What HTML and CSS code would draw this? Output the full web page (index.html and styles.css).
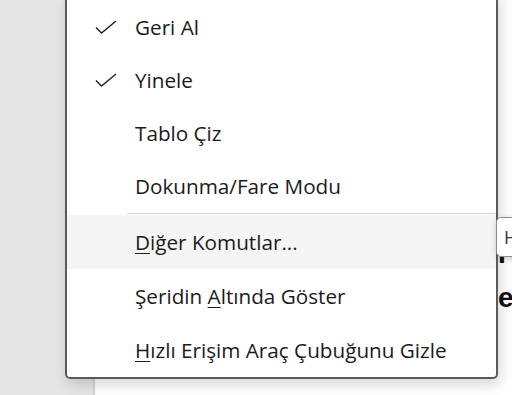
FILE: index.html
```html
<!DOCTYPE html>
<html lang="tr">
<head>
<meta charset="utf-8">
<link rel="stylesheet" href="styles.css">
</head>
<body>
<div class="app">
  <div class="gutter"></div>
  <div class="page">
    <div class="doc-line doc-line-h">Hızlı</div>
    <div class="doc-line doc-line-e">ekle</div>
  </div>
</div>

<div class="menu">
  <div class="item"><span class="check"><svg width="22" height="14" viewBox="0 0 22 14"><path d="M1 7.5 L6.5 13 L21 1" fill="none" stroke="#1f1f1f" stroke-width="1.4"/></svg></span><span class="label">Geri Al</span></div>
  <div class="item"><span class="check"><svg width="22" height="14" viewBox="0 0 22 14"><path d="M1 7.5 L6.5 13 L21 1" fill="none" stroke="#1f1f1f" stroke-width="1.4"/></svg></span><span class="label">Yinele</span></div>
  <div class="item"><span class="check"></span><span class="label">Tablo Çiz</span></div>
  <div class="item"><span class="check"></span><span class="label">Dokunma/Fare Modu</span></div>
  <div class="sep"></div>
  <div class="item item-lg item-hover"><span class="check"></span><span class="label"><u>D</u>iğer Komutlar...</span></div>
  <div class="item item-lg"><span class="check"></span><span class="label">Şeridin <u>A</u>ltında Göster</span></div>
  <div class="item item-lg"><span class="check"></span><span class="label"><u>H</u>ızlı Erişim Araç Çubuğunu Gizle</span></div>
</div>

<div class="tooltip">Hızlı Erişim</div>
</body>
</html>
```
FILE: styles.css
```css
html, body {
  margin: 0;
  padding: 0;
  width: 512px;
  height: 395px;
  overflow: hidden;
  background: #e6e6e6;
  font-family: "Open Sans", "Noto Sans", sans-serif;
}

.app {
  display: flex;
  height: 395px;
}

.gutter {
  width: 93px;
  flex: none;
  background: #e6e6e6;
}

.page {
  flex: 1;
  background: #ffffff;
  border-left: 2px solid #d4d4d4;
  padding-left: 403px;
  padding-top: 232px;
  font-family: "Liberation Sans", Arial, sans-serif;
  font-weight: bold;
  font-size: 28px;
  color: #111;
  white-space: nowrap;
  overflow: hidden;
}

.doc-line {
  line-height: 44px;
}

.menu {
  position: absolute;
  left: 65px;
  top: -12px;
  width: 429px;
  padding-top: 10px;
  background: #ffffff;
  border: 2px solid #5a5a5a;
  border-radius: 5px;
  box-shadow: 2px 6px 14px rgba(0, 0, 0, 0.16);
  color: #1b1b1b;
  font-size: 20.7px;
}

.item {
  display: flex;
  align-items: center;
  height: 53px;
}

.item-lg {
  height: 54px;
}

.item-hover {
  background: #f5f5f5;
}

.check {
  width: 68px;
  flex: none;
  display: flex;
  align-items: center;
  padding-left: 28px;
  box-sizing: border-box;
}

.check svg {
  display: block;
}

.label {
  white-space: nowrap;
}

.label u {
  text-underline-offset: 3px;
  text-decoration-thickness: 1px;
}

.sep {
  height: 1px;
  margin: 1px 0 1px 60px;
  background: #d0d0d0;
}

.tooltip {
  position: absolute;
  left: 496px;
  top: 217px;
  height: 38px;
  padding: 0 8px 0 7px;
  display: flex;
  align-items: center;
  background: #ffffff;
  border: 1px solid #8a8a8a;
  border-radius: 5px;
  box-shadow: 0 2px 6px rgba(0, 0, 0, 0.18);
  color: #333;
  font-size: 18px;
  white-space: nowrap;
}
```
